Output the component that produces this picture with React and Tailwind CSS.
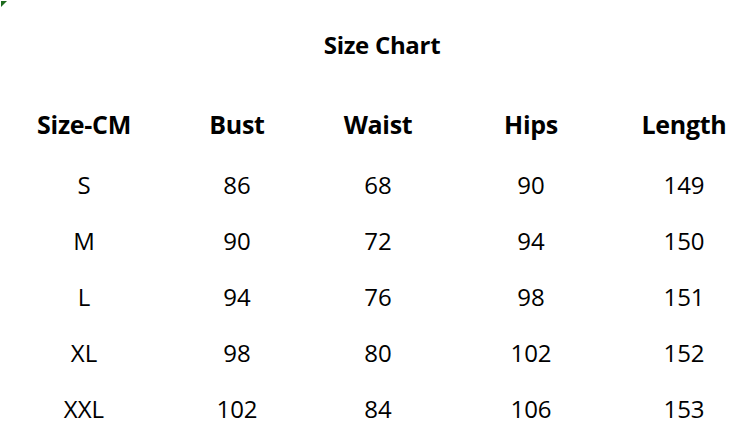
const headers = ["Size-CM", "Bust", "Waist", "Hips", "Length"];

const rows = [
  ["S", "86", "68", "90", "149"],
  ["M", "90", "72", "94", "150"],
  ["L", "94", "76", "98", "151"],
  ["XL", "98", "80", "102", "152"],
  ["XXL", "102", "84", "106", "153"],
];

const cols = "grid grid-cols-[152px_154px_128px_178px_128px] pl-[8px]";

export default function App() {
  return (
    <div className="relative w-[756px] h-[439px] bg-white text-black font-['Open_Sans','Noto_Sans',sans-serif]">
      {/* cell marker */}
      <svg className="absolute left-[1px] top-[1px]" width="6" height="6" viewBox="0 0 6 6">
        <polygon points="0,0 6,0 0,6" fill="#1e6b1e" />
      </svg>

      <div className="pt-[27px] w-[756px] text-center text-[24px] font-bold leading-[36px] tracking-[-0.3px]">
        <span className="pl-[8px]">Size Chart</span>
      </div>

      <div className={`${cols} mt-[43px] text-[25px] font-bold leading-[36px] tracking-[-0.3px]`}>
        {headers.map((h) => (
          <div key={h} className="text-center">
            {h}
          </div>
        ))}
      </div>

      <div className="mt-[25px] flex flex-col gap-[20px]">
        {rows.map((r) => (
          <div key={r[0]} className={`${cols} text-[24px] leading-[36px]`}>
            {r.map((v, i) => (
              <div key={i} className="text-center">
                {v}
              </div>
            ))}
          </div>
        ))}
      </div>
    </div>
  );
}
